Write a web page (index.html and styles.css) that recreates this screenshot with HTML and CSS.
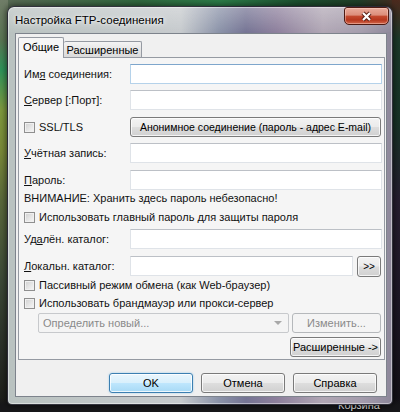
FILE: index.html
```html
<!DOCTYPE html>
<html lang="ru">
<head>
<meta charset="utf-8">
<title>Настройка FTP-соединения</title>
<link rel="stylesheet" href="styles.css">
</head>
<body>
<div class="desktop-label">Корзина</div>
<div class="window">
  <div class="titlebar">
    <span class="title">Настройка FTP-соединения</span>
    <div class="close">
      <svg width="13" height="11" viewBox="0 0 13 11">
        <path d="M3 2 L10 9 M10 2 L3 9" stroke="#5a1e14" stroke-width="4.2" fill="none"/>
        <path d="M3 2 L10 9 M10 2 L3 9" stroke="#ffffff" stroke-width="2.2" fill="none"/>
      </svg>
    </div>
  </div>
  <div class="client">
    <div class="tabs">
      <div class="tab active">Общие</div>
      <div class="tab">Расширенные</div>
    </div>
    <div class="page">
      <div class="row field-row">
        <span class="lbl">Им<u>я</u> соединения:</span>
        <input class="inp focus" type="text">
      </div>
      <div class="row field-row mt6">
        <span class="lbl"><u>С</u>ервер [:Порт]:</span>
        <input class="inp" type="text">
      </div>
      <div class="row field-row mt7">
        <span class="lbl check"><span class="cb"></span>SSL/TLS</span>
        <button class="btn anon">Анонимное соединение (пароль - адрес E-mail)</button>
      </div>
      <div class="row field-row mt6">
        <span class="lbl"><u>У</u>чётная запись:</span>
        <input class="inp" type="text">
      </div>
      <div class="row field-row mt7">
        <span class="lbl"><u>П</u>ароль:</span>
        <input class="inp" type="text">
      </div>
      <div class="row text-row mt1">ВНИМАНИЕ: Хранить здесь пароль небезопасно!</div>
      <div class="row check-row mt5"><span class="cb"></span>Использовать главный пароль для защиты пароля</div>
      <div class="row field-row mt4">
        <span class="lbl">Уд<u>а</u>лён. каталог:</span>
        <input class="inp" type="text">
      </div>
      <div class="row field-row mt7">
        <span class="lbl"><u>Л</u>окальн. каталог:</span>
        <input class="inp" type="text">
        <button class="btn browse">&gt;&gt;</button>
      </div>
      <div class="row check-row mt2"><span class="cb"></span>Пассивный режим обмена (как Web-браузер)</div>
      <div class="row check-row mt3"><span class="cb"></span>Использовать брандмауэр или прокси-сервер</div>
      <div class="row field-row mt2">
        <div class="combo disabled"><span>Определить новый...</span><span class="arrow"></span></div>
        <button class="btn disabled change">Изменить...</button>
      </div>
      <div class="row field-row end mt4">
        <button class="btn more">Расширенные -&gt;</button>
      </div>
    </div>
    <div class="buttons">
      <button class="btn default">OK</button>
      <button class="btn">Отмена</button>
      <button class="btn">Справка</button>
    </div>
  </div>
</div>
</body>
</html>
```
FILE: styles.css
```css
* { box-sizing: border-box; }

html, body { margin: 0; }

body {
  width: 400px;
  height: 412px;
  overflow: hidden;
  position: relative;
  padding: 6px 0 0 7px;
  font-family: "Liberation Sans", Arial, sans-serif;
  font-size: 11px;
  color: #111;
  background:
    linear-gradient(180deg, rgba(20,20,22,0) 0, rgba(20,20,22,0) 398px, #17171a 405px),
    linear-gradient(180deg, #707d68 0, #5b7654 40px, #2f955a 70px, #7f9a3e 110px, #7a8a38 150px, #5b6a3c 200px, #3d4a38 280px, #2a3028 350px, #1b1b18 412px) left top / 8px 100% no-repeat,
    linear-gradient(180deg, #4c2a1e 0, #1c3a2a 40px, #173326 120px, #261e30 200px, #1d1725 300px, #121015 412px) right top / 8px 100% no-repeat,
    linear-gradient(90deg, #5a6b55 0, #31693f 35%, #2c7e4a 55%, #1c502f 75%, #213f29 90%, #4a2a20 100%);
}

.desktop-label {
  position: absolute;
  left: 338px;
  top: 400px;
  font-size: 11px;
  line-height: 11px;
  color: #e6e6e6;
  text-shadow: 0 0 2px #000, 0 1px 2px #000;
}

.window {
  position: relative;
  z-index: 1;
  width: 386px;
  height: 399px;
  border: 1px solid rgba(25, 25, 35, 0.85);
  border-radius: 7px 7px 5px 5px;
  background:
    linear-gradient(180deg, rgba(255,255,255,0.28) 0, rgba(255,255,255,0) 26px),
    linear-gradient(90deg, #b9c2c0 0%, #c6cacd 45%, #8a92a8 55%, #757494 62%, #8d7f9c 70%, #b0a6b4 82%, #a49cac 92%, #8d879a 100%);
  box-shadow: 0 0 6px 1px rgba(0, 0, 0, 0.55), inset 0 0 0 1px rgba(255, 255, 255, 0.45);
}

.titlebar {
  height: 26px;
  display: flex;
  justify-content: space-between;
  align-items: flex-start;
  padding-left: 7px;
}

.title {
  margin-top: 6px;
  line-height: 14px;
  font-size: 11.5px;
  color: #000;
  text-shadow: 0 0 6px rgba(255, 255, 255, 0.9), 0 0 3px rgba(255, 255, 255, 0.8);
}

.close {
  width: 45px;
  height: 18px;
  margin-right: 3px;
  border: 1px solid #4d1a12;
  border-radius: 3px 3px 5px 5px;
  background: linear-gradient(180deg, #e9ab9b 0%, #dc8d7a 45%, #c44a30 50%, #b6371e 75%, #d2674c 100%);
  box-shadow: inset 0 0 0 1px rgba(255, 215, 205, 0.45);
  display: flex;
  align-items: center;
  justify-content: center;
}

.close svg { display: block; }

.client {
  margin: 0 5px 0 7px;
  height: 364px;
  background: #f0f0f0;
  border: 1px solid #7d838c;
  padding: 0 1px 0 2px;
}

.tabs {
  height: 23px;
  padding-top: 3px;
  display: flex;
  align-items: flex-end;
}

.tab {
  height: 16px;
  width: 78px;
  display: flex;
  align-items: center;
  justify-content: center;
  border: 1px solid #959aa2;
  border-left: none;
  border-bottom: none;
  border-radius: 2px 2px 0 0;
  background: linear-gradient(180deg, #f4f4f4 0%, #e6e6e6 50%, #dadada 100%);
  color: #000;
}

.tab.active {
  width: 46px;
  height: 21px;
  margin-bottom: -1px;
  border-left: 1px solid #959aa2;
  border-right: 1px solid #959aa2;
  background: #f6f6f6;
  position: relative;
  z-index: 1;
  padding-bottom: 2px;
}

.page {
  height: 303px;
  border: 1px solid #959aa2;
  background: #f5f5f5;
  padding: 6px 2px 0 5px;
}

.row { display: flex; align-items: center; }
.field-row { height: 20px; }
.text-row { height: 14px; line-height: 14px; }
.check-row { height: 15px; line-height: 15px; }
.end { justify-content: flex-end; }

.mt1 { margin-top: 1px; }
.mt2 { margin-top: 2px; }
.mt3 { margin-top: 3px; }
.mt4 { margin-top: 4px; }
.mt5 { margin-top: 5px; }
.mt6 { margin-top: 6px; }
.mt7 { margin-top: 7px; }

.lbl {
  width: 106px;
  flex: none;
  line-height: 14px;
  white-space: nowrap;
}

.lbl.check { display: flex; align-items: center; }

u { text-decoration: underline; text-underline-offset: 1px; }

.cb {
  width: 11px;
  height: 11px;
  flex: none;
  margin-right: 4px;
  border: 1px solid #8f8f8f;
  background: linear-gradient(135deg, #cfcfcf 0%, #e6e6e6 55%, #f7f7f7 100%);
  box-shadow: inset 0 0 0 1px #f0f0f0;
}

.inp {
  flex: 1;
  min-width: 0;
  height: 20px;
  margin: 0;
  padding: 0 3px;
  font: inherit;
  background: #fff;
  border: 1px solid #dfe3e8;
  border-top-color: #bcc0c6;
  outline: none;
}

.inp.focus {
  border-color: #7ea6cc #b5d2ea #b5d2ea #b5d2ea;
}

.btn {
  height: 20px;
  margin: 0;
  padding: 0;
  font: inherit;
  color: #000;
  border: 1px solid #7a7a7a;
  border-radius: 3px;
  background: linear-gradient(180deg, #f3f3f3 0%, #ebebeb 48%, #dddddd 52%, #d0d0d0 100%);
  box-shadow: inset 0 0 0 1px rgba(255, 255, 255, 0.75);
  white-space: nowrap;
}

.anon { flex: 1; margin-right: 1px; font-size: 10.5px; }

.browse {
  width: 24px;
  height: 21px;
  margin-left: 4px;
  margin-right: 1px;
  font-size: 10px;
}

.combo {
  width: 251px;
  height: 20px;
  margin-left: 14px;
  padding: 0 6px 0 4px;
  display: flex;
  align-items: center;
  justify-content: space-between;
  border: 1px solid #c7c9cc;
  border-radius: 2px;
  background: #f4f4f4;
  color: #8a8a8a;
}

.arrow {
  width: 0;
  height: 0;
  border-left: 4px solid transparent;
  border-right: 4px solid transparent;
  border-top: 4px solid #a8a8a8;
}

.btn.disabled,
.change {
  border-color: #b5b8bb;
  background: #f4f4f4;
  color: #8a8a8a;
  box-shadow: none;
}

.change {
  width: 89px;
  margin-left: 3px;
  margin-right: 1px;
}

.more {
  width: 91px;
  margin-right: 1px;
}

.buttons {
  margin-top: 13px;
  display: flex;
  justify-content: flex-end;
  gap: 8px;
  padding-right: 8px;
}

.buttons .btn { width: 84px; }

.btn.default {
  border-color: #3c7fb1;
  background: linear-gradient(180deg, #eaf6fd 0%, #d9f0fc 48%, #bee6fd 52%, #a7d9f5 100%);
  box-shadow: inset 0 0 0 1px rgba(255, 255, 255, 0.8), 0 0 2px rgba(80, 170, 230, 0.6);
}
```
